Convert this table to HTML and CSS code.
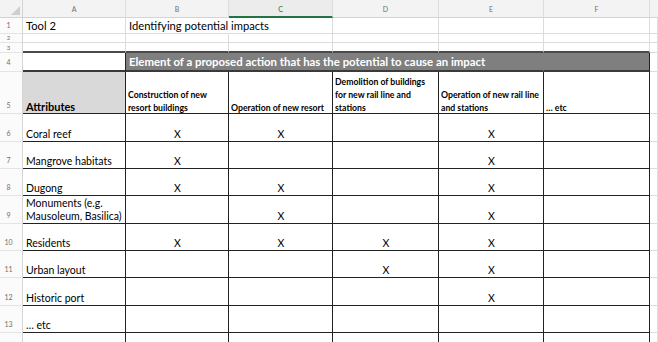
FILE: index.html
```html
<!DOCTYPE html>
<html>
<head>
<meta charset="utf-8">
<link rel="stylesheet" href="styles.css">
</head>
<body>
<div class="sheet">
  <!-- column headers -->
  <div class="corner"><svg class="tri" width="10" height="10" viewBox="0 0 10 10"><polygon points="10,1 10,10 1,10" fill="#cfcfcf"/></svg></div>
  <div class="ch">A</div>
  <div class="ch">B</div>
  <div class="ch sel">C</div>
  <div class="ch">D</div>
  <div class="ch">E</div>
  <div class="ch">F</div>
  <div class="ch last"></div>

  <!-- row 1 -->
  <div class="rh">1</div>
  <div class="c r1">Tool 2</div>
  <div class="c r1 over">Identifying potential impacts</div>
  <div class="c"></div><div class="c"></div><div class="c"></div><div class="c"></div><div class="c"></div>

  <!-- row 2 -->
  <div class="rh small">2</div>
  <div class="c"></div><div class="c"></div><div class="c"></div><div class="c"></div><div class="c"></div><div class="c"></div><div class="c"></div>

  <!-- row 3 -->
  <div class="rh small">3</div>
  <div class="c db"></div><div class="c db"></div><div class="c db"></div><div class="c db"></div><div class="c db"></div><div class="c db"></div><div class="c"></div>

  <!-- row 4 -->
  <div class="rh mid">4</div>
  <div class="c t r4"></div>
  <div class="c t r4 dark span4">Element of a proposed action that has the potential to cause an impact</div>
  <div class="c t r4 dark"></div>
  <div class="c"></div>

  <!-- row 5 -->
  <div class="rh">5</div>
  <div class="c t attr">Attributes</div>
  <div class="c t hd"><span>Construction of new<br>resort buildings</span></div>
  <div class="c t hd"><span>Operation of new resort</span></div>
  <div class="c t hd"><span>Demolition of buildings<br>for new rail line and<br>stations</span></div>
  <div class="c t hd"><span>Operation of new rail line<br>and stations</span></div>
  <div class="c t hd"><span>… etc</span></div>
  <div class="c"></div>

  <!-- row 6 -->
  <div class="rh">6</div>
  <div class="c t">Coral reef</div>
  <div class="c t x">X</div><div class="c t x">X</div><div class="c t x"></div><div class="c t x">X</div><div class="c t"></div>
  <div class="c"></div>

  <!-- row 7 -->
  <div class="rh">7</div>
  <div class="c t">Mangrove habitats</div>
  <div class="c t x">X</div><div class="c t x"></div><div class="c t x"></div><div class="c t x">X</div><div class="c t"></div>
  <div class="c"></div>

  <!-- row 8 -->
  <div class="rh">8</div>
  <div class="c t">Dugong</div>
  <div class="c t x">X</div><div class="c t x">X</div><div class="c t x"></div><div class="c t x">X</div><div class="c t"></div>
  <div class="c"></div>

  <!-- row 9 -->
  <div class="rh">9</div>
  <div class="c t two">Monuments (e.g.<br>Mausoleum, Basilica)</div>
  <div class="c t x"></div><div class="c t x">X</div><div class="c t x"></div><div class="c t x">X</div><div class="c t"></div>
  <div class="c"></div>

  <!-- row 10 -->
  <div class="rh">10</div>
  <div class="c t">Residents</div>
  <div class="c t x">X</div><div class="c t x">X</div><div class="c t x">X</div><div class="c t x">X</div><div class="c t"></div>
  <div class="c"></div>

  <!-- row 11 -->
  <div class="rh">11</div>
  <div class="c t">Urban layout</div>
  <div class="c t x"></div><div class="c t x"></div><div class="c t x">X</div><div class="c t x">X</div><div class="c t"></div>
  <div class="c"></div>

  <!-- row 12 -->
  <div class="rh">12</div>
  <div class="c t">Historic port</div>
  <div class="c t x"></div><div class="c t x"></div><div class="c t x"></div><div class="c t x">X</div><div class="c t"></div>
  <div class="c"></div>

  <!-- row 13 -->
  <div class="rh">13</div>
  <div class="c t">… etc</div>
  <div class="c t x"></div><div class="c t x"></div><div class="c t x"></div><div class="c t x"></div><div class="c t"></div>
  <div class="c"></div>

  <!-- row 14 -->
  <div class="rh">14</div>
  <div class="c t"></div><div class="c t"></div><div class="c t"></div><div class="c t"></div><div class="c t"></div><div class="c t"></div>
  <div class="c"></div>
</div>
</body>
</html>
```

FILE: styles.css
```css
* { box-sizing: border-box; }
html, body {
  margin: 0;
  padding: 0;
  background: #ffffff;
  overflow: hidden;
}
body {
  font-family: Lato, "Liberation Sans", sans-serif;
  color: #000;
  width: 658px;
  height: 342px;
}
.sheet {
  display: grid;
  grid-template-columns: 23px 103px 103px 104px 106px 105px 106px 1fr;
  grid-template-rows: 18px 16px 9px 10px 19px 42px 28px 27px 27px 28px 27px 27px 28px 27px 22px;
  width: 658px;
}
.corner {
  background: #f3f3f3;
  border-right: 1px solid #d4d4d4;
  border-bottom: 1px solid #d4d4d4;
  position: relative;
}
.tri {
  position: absolute;
  right: 2px;
  bottom: 2px;
}
.ch {
  background: #f3f3f3;
  border-right: 1px solid #dedede;
  border-bottom: 1px solid #d4d4d4;
  font-size: 7px;
  color: #6f6f6f;
  display: flex;
  align-items: center;
  justify-content: center;
  padding-top: 1px;
}
.ch.sel {
  background: #ececec;
  color: #217346;
  border-bottom: 2px solid #217346;
}
.ch.last { border-right: none; }
.rh {
  background: #fbfbfb;
  border-right: 1px solid #d4d4d4;
  border-bottom: 1px solid #e4e4e4;
  font-size: 7px;
  color: #6f6f6f;
  display: flex;
  align-items: flex-end;
  justify-content: center;
  padding-right: 5px;
  padding-bottom: 4px;
  line-height: 1;
}
.rh.small { padding-bottom: 1px; font-size: 6px; }
.rh.mid { padding-bottom: 5px; }
.c {
  border-right: 1px solid #dcdcdc;
  border-bottom: 1px solid #dcdcdc;
  font-size: 10.5px;
  line-height: 13px;
  padding: 0 2px 0 3px;
  display: flex;
  align-items: flex-end;
  white-space: nowrap;
  overflow: hidden;
}
.c.r1 {
  font-size: 11.2px;
  padding-bottom: 1px;
}
.c.over {
  overflow: visible;
  border-right-color: transparent;
  position: relative;
  z-index: 1;
}
.c.db {
  border-bottom: 2px solid #4a4a4a;
}
.c.t {
  border-right-color: #222;
  border-bottom-color: #222;
}
.c.r4 {
  border-bottom: 2px solid #3a3a3a;
}
.c.dark {
  background: #7f7f7f;
  color: #ffffff;
  font-weight: 700;
  font-size: 11.4px;
  align-items: center;
  padding-bottom: 0;
}
.span4 {
  grid-column: span 4;
  border-right-color: #7f7f7f !important;
}
.c.attr {
  background: #d9d9d9;
  font-weight: 700;
  font-size: 11px;
}
.c.hd {
  font-weight: 700;
  font-size: 8.7px;
  line-height: 13px;
  padding-left: 2px;
}
.c.hd span {
  margin-bottom: -1px;
}
.c.x {
  justify-content: center;
}
```
